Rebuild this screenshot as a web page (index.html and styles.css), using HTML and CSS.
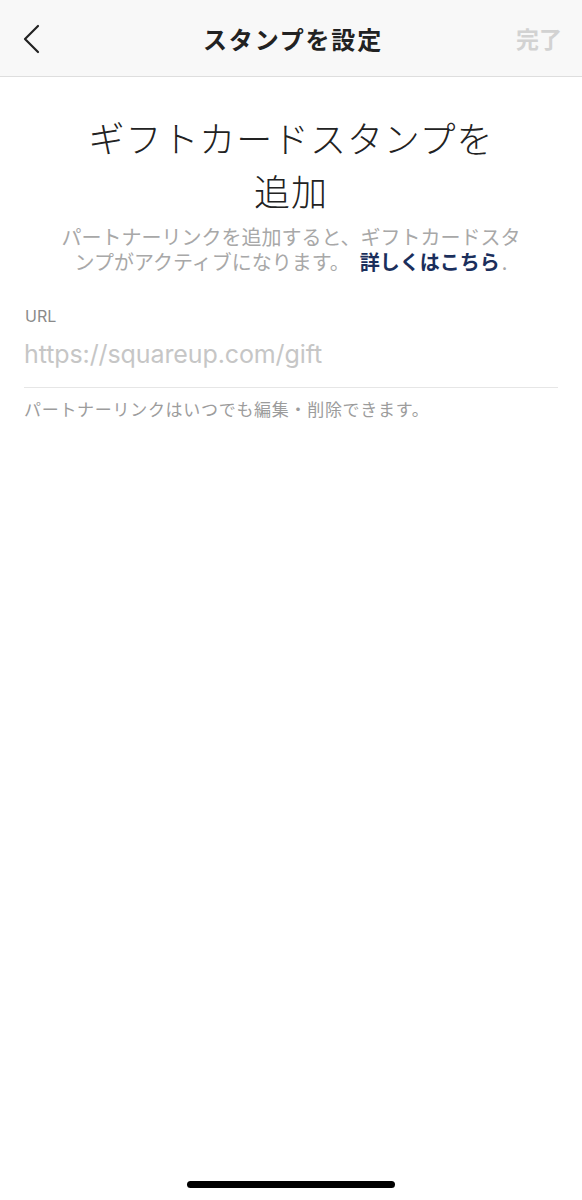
FILE: index.html
```html
<!DOCTYPE html>
<html lang="ja">
<head>
<meta charset="utf-8">
<title>スタンプを設定</title>
<link rel="stylesheet" href="styles.css">
</head>
<body>
<div class="page">
  <header class="navbar">
    <button class="nav-back" aria-label="戻る">
      <svg width="18" height="30" viewBox="0 0 18 30"><path d="M16 2 L3 15 L16 28" fill="none" stroke="#222" stroke-width="2.2" stroke-linecap="round" stroke-linejoin="round"/></svg>
    </button>
    <h1 class="nav-title">スタンプを設定</h1>
    <span class="nav-done">完了</span>
  </header>

  <main class="content">
    <h2 class="headline">ギフトカードスタンプを<br>追加</h2>
    <p class="lead"><span class="lead-line">パートナーリンクを追加すると、ギフトカードスタ</span><br><span class="lead-line">ンプがアクティブになります。</span><span class="lead-gap"></span><a class="lead-link" href="#">詳しくはこちら</a><span class="lead-dot">.</span></p>

    <section class="field">
      <label class="field-label">URL</label>
      <div class="field-input">https://squareup.com/gift</div>
      <p class="field-help">パートナーリンクはいつでも編集・削除できます。</p>
    </section>
  </main>

  <div class="home-indicator"></div>
</div>
</body>
</html>
```

FILE: styles.css
```css
* { box-sizing: border-box; }
html, body { margin: 0; padding: 0; background: #fff; }
body {
  font-family: "Noto Sans CJK JP", "Noto Sans", sans-serif;
  color: #222;
}
.page {
  display: flex;
  flex-direction: column;
  height: 1200px;
}
.navbar {
  height: 77px;
  background: #f8f8f8;
  border-bottom: 1px solid #dedede;
  display: flex;
  align-items: center;
  justify-content: space-between;
  padding: 0 20px 0 20px;
}
.nav-back {
  width: 40px;
  height: 40px;
  border: 0;
  background: none;
  padding: 0 0 0 2px;
  display: flex;
  align-items: center;
  margin-top: 2px;
}
.nav-title {
  margin: 0;
  font-size: 24px;
  font-weight: 700;
  letter-spacing: 1.8px;
  color: #222;
  margin-left: 4px;
}
.nav-done {
  width: 40px;
  text-align: right;
  font-size: 23px;
  font-weight: 700;
  color: #d2d2d2;
  white-space: nowrap;
  display: flex;
  justify-content: flex-end;
}
.content {
  padding: 34px 0 0;
}
.headline {
  margin: 0;
  text-align: center;
  font-size: 36px;
  font-weight: 300;
  line-height: 53px;
  letter-spacing: 0.9px;
  color: #222;
}
.lead {
  margin: 7px 0 0;
  padding: 0 40px;
  text-align: center;
  font-size: 20px;
  line-height: 25px;
  color: #a8a8a8;
  font-weight: 400;
}
.lead-line {
  display: inline-block;
  white-space: nowrap;
}
.lead-gap {
  display: inline-block;
  width: 10px;
}
.lead-link {
  display: inline-block;
  color: #1b2f5c;
  font-weight: 700;
  text-decoration: none;
}
.lead-dot {
  display: inline-block;
  margin-left: 2px;
}
.field {
  margin: 32px 24px 0 24px;
}
.field-label {
  display: block;
  font-family: "Inter", "Roboto", sans-serif;
  font-size: 16px;
  line-height: 20px;
  color: #8a8a8a;
  padding-left: 1px;
}
.field-input {
  font-family: "Inter", "Roboto", sans-serif;
  font-size: 25px;
  font-weight: 400;
  line-height: 30px;
  color: #c6c6c6;
  padding: 13px 0 18px 0;
  border-bottom: 1px solid #e6e6e6;
  letter-spacing: -0.1px;
}
.field-help {
  margin: 10px 0 0;
  font-size: 17px;
  line-height: 22px;
  letter-spacing: 0.7px;
  color: #9c9c9c;
}
.home-indicator {
  margin: auto auto 12px;
  width: 208px;
  height: 7px;
  border-radius: 4px;
  background: #000;
}
```
